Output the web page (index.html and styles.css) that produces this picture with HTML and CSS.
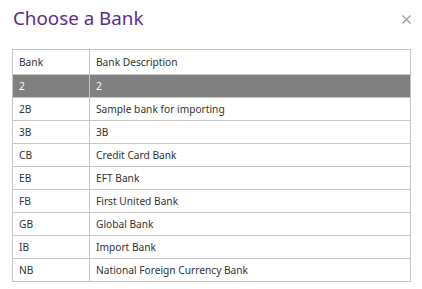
FILE: index.html
```html
<!DOCTYPE html>
<html lang="en">
<head>
  <meta charset="UTF-8" />
  <title>Choose a Bank</title>
  <link rel="stylesheet" href="styles.css">
</head>
<body>

  <!-- Header -->
  <div class="dialog-header">
    <h1>Choose a Bank</h1>
    <button type="button" class="close-btn" aria-label="Close">
      <svg width="9" height="9" viewBox="0 0 9 9"><path d="M0.5 0.5 L8.5 8.5 M8.5 0.5 L0.5 8.5" stroke="#999" stroke-width="1.2" fill="none"/></svg>
    </button>
  </div>

  <!-- Bank list -->
  <table class="bank-table">
    <thead>
      <tr><th class="col-code">Bank</th><th>Bank Description</th></tr>
    </thead>
    <tbody>
      <tr class="selected"><td>2</td><td>2</td></tr>
      <tr><td>2B</td><td>Sample bank for importing</td></tr>
      <tr><td>3B</td><td>3B</td></tr>
      <tr><td>CB</td><td>Credit Card Bank</td></tr>
      <tr><td>EB</td><td>EFT Bank</td></tr>
      <tr><td>FB</td><td>First United Bank</td></tr>
      <tr><td>GB</td><td>Global Bank</td></tr>
      <tr><td>IB</td><td>Import Bank</td></tr>
      <tr><td>NB</td><td>National Foreign Currency Bank</td></tr>
    </tbody>
  </table>

</body>
</html>
```

FILE: styles.css
```css
body {
  margin: 0;
  padding: 0 11px 0 12px;
  background: #fff;
  font-family: 'Noto Sans', 'Open Sans', sans-serif;
  color: #333;
}
.dialog-header {
  display: flex;
  justify-content: space-between;
  align-items: center;
  height: 36px;
  margin-bottom: 13px;
}
.dialog-header h1 {
  margin: 0 0 0 1px;
  font-size: 18.8px;
  font-weight: 400;
  color: #5c2d91;
}
.close-btn {
  background: none;
  border: none;
  padding: 0;
  cursor: pointer;
  display: flex;
  margin-top: 2px;
}
.bank-table {
  width: 100%;
  border-collapse: collapse;
  font-size: 10.2px;
}
.bank-table th,
.bank-table td {
  border: 1px solid #c6c6c6;
  text-align: left;
  font-weight: 400;
  padding: 0 6px;
  height: 22px;
}
.bank-table th {
  height: 24px;
}
.col-code {
  width: 64px;
}
.bank-table tr.selected td {
  background-color: #808080;
  color: #fff;
}
```
